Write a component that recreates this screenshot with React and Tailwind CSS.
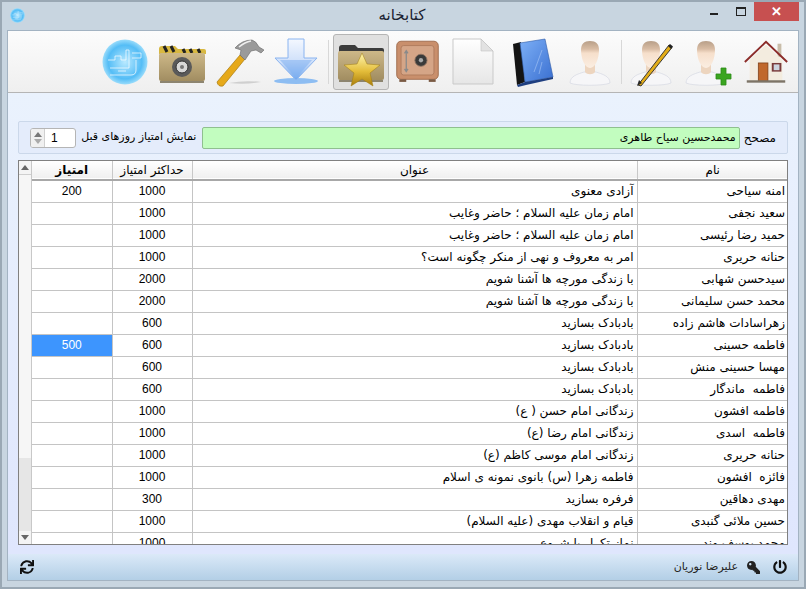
import React from 'react';
import { FaSync, FaKey, FaPowerOff } from 'react-icons/fa';

const rows = [
  ['امنه سیاحی', 'آزادی معنوی', '1000', '200'],
  ['سعید نجفی', 'امام زمان علیه السلام ؛ حاضر وغایب', '1000', ''],
  ['حمید رضا رئیسی', 'امام زمان علیه السلام ؛ حاضر وغایب', '1000', ''],
  ['حنانه حریری', 'امر به معروف و نهی از منکر چگونه است؟', '1000', ''],
  ['سیدحسن شهابی', 'با زندگی مورچه ها آشنا شویم', '2000', ''],
  ['محمد حسن سلیمانی', 'با زندگی مورچه ها آشنا شویم', '2000', ''],
  ['زهراسادات هاشم زاده', 'بادبادک بسازید', '600', ''],
  ['فاطمه حسینی', 'بادبادک بسازید', '600', '500'],
  ['مهسا حسینی منش', 'بادبادک بسازید', '600', ''],
  ['فاطمه  ماندگار', 'بادبادک بسازید', '600', ''],
  ['فاطمه افشون', 'زندگانی امام حسن ( ع)', '1000', ''],
  ['فاطمه  اسدی', 'زندگانی امام رضا (ع)', '1000', ''],
  ['حنانه حریری', 'زندگانی امام موسی کاظم (ع)', '1000', ''],
  ['فائزه  افشون', 'فاطمه زهرا (س) بانوی نمونه ی اسلام', '1000', ''],
  ['مهدی دهاقین', 'فرفره بسازید', '300', ''],
  ['حسین ملائی گنبدی', 'قیام و انقلاب مهدی (علیه السلام)', '1000', ''],
  ['محمد یوسف وند', 'نماز تکرار یا شروع', '1000', ''],
];

const Person = ({ children }) => (
  <svg width="52" height="52" viewBox="0 0 52 52" className="shrink-0">
    <defs>
      <linearGradient id="skin" x1="0" y1="0" x2="0" y2="1">
        <stop offset="0" stopColor="#b89f88" />
        <stop offset="0.3" stopColor="#d9bda5" />
        <stop offset="0.45" stopColor="#f6dfcb" />
        <stop offset="1" stopColor="#fbeee2" />
      </linearGradient>
    </defs>
    <path d="M6 47c0-7 8-9 14-11h12c6 2 14 4 14 11-6 3-34 3-40 0z" fill="#f6f6f8" stroke="#d5d9e2" strokeWidth="0.7" />
    <path d="M21 28h10v8c-2 3-8 3-10 0z" fill="#edd5bf" />
    <path d="M17 14c0-6 3-9 9-9s9 3 9 9c0 9-4 18-9 18s-9-9-9-18z" fill="url(#skin)" />
    {children}
  </svg>
);

const Home = () => (
  <svg width="50" height="50" viewBox="0 0 52 52" className="shrink-0">
    <rect x="38" y="7" width="4" height="14" fill="#c9bda9" />
    <path d="M9 24L26 8l17 16v22H9z" fill="#f3ecdf" />
    <path d="M4 26L26 5l22 21" fill="none" stroke="#8c2d2a" strokeWidth="2" />
    <rect x="18" y="27" width="10" height="19" fill="#c0682c" stroke="#7c3d17" strokeWidth="0.8" />
    <rect x="32" y="27" width="10" height="9" fill="#7a3b3b" />
    <rect x="34" y="28.5" width="6" height="6" fill="#cdd4de" />
    <rect x="6" y="45" width="40" height="2.5" fill="#7d7467" />
  </svg>
);

const UserAdd = () => (
  <Person>
    <path d="M37 37h5v-6h5v6h5v5h-5v6h-5v-6h-5z" fill="#3aa520" stroke="#2b8a17" strokeWidth="0.8" transform="translate(-1 1)" />
  </Person>
);

const UserEdit = () => (
  <Person>
    <path d="M13 49L44 9l3 2.5L16 50z" fill="#e3ad18" stroke="#2a2a2a" strokeWidth="0.9" />
    <path d="M12 50l2-6 3 3z" fill="#2a2a2a" />
    <path d="M43 10l2-2 3 2.5-2 2.5z" fill="#222" />
  </Person>
);

const Book = () => (
  <svg width="52" height="52" viewBox="0 0 52 52" className="shrink-0">
    <defs>
      <linearGradient id="bk" x1="0" y1="0" x2="1" y2="1">
        <stop offset="0" stopColor="#7db0f7" />
        <stop offset="1" stopColor="#3a6fd0" />
      </linearGradient>
    </defs>
    <path d="M7 8l8-2 4 40-8 3z" fill="#141414" />
    <path d="M14 7l25-4 8 38-28 5z" fill="url(#bk)" stroke="#2e5aa8" strokeWidth="0.6" />
    <path d="M11 49l8-3 28-5v2L20 49l-8 2z" fill="#1f3f80" />
    <path d="M28 36l8-22M33 38l3-12" stroke="#b8d3fb" strokeWidth="0.5" />
  </svg>
);

const Doc = () => (
  <svg width="52" height="52" viewBox="0 0 52 52" className="shrink-0">
    <defs>
      <linearGradient id="dc" x1="0" y1="0" x2="0" y2="1">
        <stop offset="0" stopColor="#ffffff" />
        <stop offset="1" stopColor="#e6e6e6" />
      </linearGradient>
    </defs>
    <path d="M7 3h28l12 12v33H7z" fill="url(#dc)" stroke="#c9c9c9" />
    <path d="M35 3v12h12z" fill="#e2e2e2" stroke="#c4c4c4" strokeWidth="0.6" />
  </svg>
);

const Safe = () => (
  <svg width="45" height="48" viewBox="0 0 52 52" className="shrink-0">
    <rect x="2" y="2" width="48" height="44" rx="5" fill="#c98f6c" stroke="#9a6647" />
    <rect x="7" y="7" width="38" height="34" rx="3" fill="#d5a587" stroke="#ad785a" />
    <rect x="5" y="46" width="8" height="3" fill="#7a5a44" />
    <rect x="39" y="46" width="8" height="3" fill="#7a5a44" />
    <path d="M13 14v22M11 16l2-3 2 3M11 34l2 3 2-3" stroke="#8a8a8a" strokeWidth="1.5" fill="none" />
    <circle cx="30" cy="24" r="7" fill="#3a3a3a" stroke="#8a7060" />
    <circle cx="30" cy="24" r="2.5" fill="#aaa" />
  </svg>
);

const folderGrad = (
  <linearGradient id="fold" x1="0" y1="0" x2="0" y2="1">
    <stop offset="0" stopColor="#cdb888" />
    <stop offset="1" stopColor="#a18d61" />
  </linearGradient>
);

const StarFolder = () => (
  <svg width="52" height="52" viewBox="0 0 52 52" className="shrink-0">
    <defs>
      {folderGrad}
      <linearGradient id="star" x1="0" y1="0" x2="0" y2="1">
        <stop offset="0" stopColor="#fff6b0" />
        <stop offset="0.55" stopColor="#e4bd3a" />
        <stop offset="1" stopColor="#a87c0c" />
      </linearGradient>
    </defs>
    <path d="M4 12q0-3 3-3h13l3 3h24q2 0 2 2v3H4z" fill="#3c3c3c" />
    <rect x="3" y="15" width="46" height="29" rx="2" fill="url(#fold)" />
    <rect x="4" y="44" width="44" height="2" fill="#8d8570" />
    <path d="M27 17l5 11 13 1-10 8 3 13-11-7-11 7 3-13-10-8 13-1z" fill="url(#star)" stroke="#a07c10" strokeWidth="0.5" />
  </svg>
);

const Download = () => (
  <svg width="52" height="52" viewBox="0 0 52 52" className="shrink-0">
    <defs>
      <linearGradient id="dl" x1="0" y1="0" x2="0" y2="1">
        <stop offset="0" stopColor="#f4f8ff" />
        <stop offset="0.55" stopColor="#cfe0fa" />
        <stop offset="1" stopColor="#6ea6ee" />
      </linearGradient>
    </defs>
    <ellipse cx="26" cy="45" rx="22" ry="3" fill="#8dbdf2" />
    <path d="M18 3h16v19h13L26 44 5 22h13z" fill="url(#dl)" stroke="#8ab4f0" />
    <path d="M26 24l-16 0 16 18 16-18z" fill="#7fb0f0" opacity="0.55" />
  </svg>
);

const Hammer = () => (
  <svg width="52" height="52" viewBox="0 0 52 52" className="shrink-0">
    <path d="M16 47q16-3 32-1-16 3-32 1z" fill="#cfcfcf" />
    <path d="M4 46l23-27 5 4L10 50q-5 1-6-4z" fill="#e6a91a" stroke="#a87a10" strokeWidth="0.7" />
    <path d="M22 12q7-8 17-8 4 1 7 7l5 3-3 3-5-3-5 1-6 9-5-5 1-5q-3-1-6-2z" fill="#9a9a9a" stroke="#666" strokeWidth="0.6" />
    <path d="M26 11q6-5 12-6" stroke="#eee" strokeWidth="1.5" fill="none" />
  </svg>
);

const CameraFolder = () => (
  <svg width="52" height="52" viewBox="0 0 52 52" className="shrink-0">
    <defs>{folderGrad}</defs>
    <path d="M3 13q0-3 3-3h13l3 3h26q2 0 2 2v3H3z" fill="#d8b840" />
    <path d="M8 10l3 6M15 10l3 6M27 13l2 4M34 13l2 4M42 13l2 4" stroke="#222" strokeWidth="3" />
    <rect x="3" y="17" width="46" height="28" rx="2" fill="url(#fold)" />
    <rect x="4" y="45" width="44" height="2" fill="#8d8570" />
    <circle cx="26" cy="31" r="10" fill="#5a5a5a" />
    <circle cx="26" cy="31" r="6" fill="#d8d8d8" stroke="#333" />
    <circle cx="26" cy="31" r="2" fill="#777" />
  </svg>
);

const Logo = ({ size = 46 }) => (
  <svg width={size} height={size} viewBox="0 0 46 46" className="shrink-0">
    <defs>
      <radialGradient id="lg" cx="0.5" cy="0.5" r="0.5">
        <stop offset="0" stopColor="#b9e9ff" />
        <stop offset="0.75" stopColor="#54bdf6" />
        <stop offset="1" stopColor="#9adcfb" />
      </radialGradient>
    </defs>
    <circle cx="23" cy="23" r="22.5" fill="url(#lg)" />
    <path d="M6 21h7v-4h6v4h5V11h3v18H8M30 14h9v5h-9M34 21v10q0 5-5 5H8M24 32h-8" fill="none" stroke="#fff" strokeWidth="0.7" />
  </svg>
);

const Separator = () => <div className="w-[1px] h-[44px] bg-[#d8d8d8] mx-[3px]"></div>;

const ToolButton = ({ active, children, className = 'w-[56px]' }) => (
  <div className={`${className} h-[56px] flex items-center justify-center rounded-[3px] border ${active ? 'bg-[#e0e0e0] border-[#b5b5b5]' : 'border-transparent'}`}>
    {children}
  </div>
);

const App = () => {
  return (
    <div className="w-[806px] h-[589px] bg-[#c8d5e0] border-2 border-[#9aa8b4] flex flex-col overflow-hidden text-[11px] text-black" style={{ fontFamily: '"DejaVu Sans", sans-serif' }}>
      {/* title bar */}
      <div className="h-[28px] shrink-0 flex items-start relative">
        <div className="w-[100px] pl-[8px] pt-[6px]"><Logo size={15} /></div>
        <div className="flex-1 text-center text-[15px] leading-[20px] text-[#1a2230] mt-[3px] -ml-[2px]" dir="rtl">کتابخانه</div>
        <div className="w-[100px] flex items-start justify-end">
          <div className="w-[8px] h-[2px] bg-[#222] mt-[11px] mr-[18px]"></div>
          <div className="w-[10px] h-[9px] border border-[#222] border-t-2 mt-[5px] mr-[8px]"></div>
          <div className="w-[45px] h-[19px] bg-[#c75050] flex items-center justify-center text-white mr-[5px] text-[13px] font-bold" style={{ fontFamily: '"Liberation Sans", sans-serif' }}>✕</div>
        </div>
      </div>

      {/* client area */}
      <div className="flex-1 mx-[5px] mb-[6px] border border-[#a3b3c2] flex flex-col min-h-0">
        {/* toolbar */}
        <div className="h-[62px] shrink-0 bg-gradient-to-b from-[#fcfcfc] to-[#efefef] border-b border-[#b5b5b5] flex items-center justify-end pr-[4px] gap-[1px]">
          <ToolButton><Logo /></ToolButton>
          <ToolButton><CameraFolder /></ToolButton>
          <ToolButton><Hammer /></ToolButton>
          <ToolButton><Download /></ToolButton>
          <Separator />
          <ToolButton active><StarFolder /></ToolButton>
          <ToolButton className="w-[55px]"><Safe /></ToolButton>
          <ToolButton className="w-[56px] pr-[4px]"><Doc /></ToolButton>
          <ToolButton className="w-[58px]"><Book /></ToolButton>
          <ToolButton className="w-[55px]"><Person /></ToolButton>
          <Separator />
          <ToolButton className="w-[54px] pr-[4px]"><UserEdit /></ToolButton>
          <ToolButton className="w-[56px] pr-[6px]"><UserAdd /></ToolButton>
          <ToolButton><Home /></ToolButton>
        </div>

        {/* content */}
        <div className="flex-1 min-h-0 bg-gradient-to-b from-[#eaf2fd] to-[#dfe6fd] px-[10px] pt-[28px] pb-[9px] flex flex-col">
          {/* filter panel */}
          <div className="h-[33px] shrink-0 border border-[#cbd8ea] rounded-[2px] bg-[#e4ecfb] flex items-center pl-[11px] pr-[11px]">
            <div className="w-[46px] h-[20px] bg-white border border-[#b5b5b5] rounded-[3px] flex items-stretch overflow-hidden">
              <div className="w-[14px] border-r border-[#d0d0d0] bg-[#f0f0f0] flex flex-col items-center justify-center gap-[2px]">
                <div className="w-0 h-0 border-x-[4px] border-x-transparent border-b-[5px] border-b-[#777]"></div>
                <div className="w-0 h-0 border-x-[4px] border-x-transparent border-t-[5px] border-t-[#aaa]"></div>
              </div>
              <div className="flex-1 pl-[6px] leading-[18px] text-[12px]" style={{ fontFamily: '"Liberation Sans", sans-serif' }}>1</div>
            </div>
            <div className="w-[126px] text-center" dir="rtl">نمایش امتیاز روزهای قبل</div>
            <div className="w-[539px] h-[22px] bg-[#c2fdbf] border border-[#8fc08f] rounded-[2px] pr-[3px] leading-[20px] text-right" dir="rtl">محمدحسین سیاح طاهری</div>
            <div className="flex-1 text-center text-[12px] pl-[4px]" dir="rtl">مصحح</div>
          </div>

          {/* table */}
          <div className="mt-[6px] h-[385px] shrink-0 border border-[#808080] bg-white flex overflow-hidden text-[12px]">
            <div className="w-[13px] shrink-0 flex flex-col border-r border-[#c8c8c8] bg-[#e6e6e6]">
              <div className="h-[14px] bg-[#f4f4f4] border-b border-[#cfcfcf] flex items-center justify-center">
                <div className="w-0 h-0 border-x-[4px] border-x-transparent border-b-[5px] border-b-[#666]"></div>
              </div>
              <div className="h-[283px] bg-[#f6f6f6]"></div>
              <div className="flex-1"></div>
              <div className="h-[13px] bg-[#f4f4f4] flex items-center justify-center">
                <div className="w-0 h-0 border-x-[4px] border-x-transparent border-t-[5px] border-t-[#666]"></div>
              </div>
            </div>
            <table className="table-fixed border-collapse w-[756px] h-fit" dir="ltr">
              <colgroup>
                <col className="w-[80px]" />
                <col className="w-[80px]" />
                <col className="w-[445px]" />
                <col className="w-[151px]" />
              </colgroup>
              <thead>
                <tr className="h-[19px] leading-[15px] bg-gradient-to-b from-[#ffffff] to-[#f0f0f0] border-b-2 border-[#a8a8a8]">
                  <th className="font-bold text-center pt-[1px] border-r border-[#c8c8c8]" dir="rtl">امتیاز</th>
                  <th className="font-normal text-center pt-[1px] border-r border-[#c8c8c8]" dir="rtl">حداکثر امتیاز</th>
                  <th className="font-normal text-center pt-[1px] border-r border-[#c8c8c8]" dir="rtl">عنوان</th>
                  <th className="font-normal text-center pt-[1px]" dir="rtl">نام</th>
                </tr>
              </thead>
              <tbody>
                {rows.map((row, i) => (
                  <tr key={i} className="h-[22px] border-b border-[#c4c4c4]">
                    <td className={`text-center border-r border-[#c4c4c4] ${row[3] === '500' ? 'bg-[#3d95fe] text-white' : ''}`} style={{ fontFamily: '"Liberation Sans", sans-serif' }}>{row[3]}</td>
                    <td className="text-center border-r border-[#c4c4c4]" style={{ fontFamily: '"Liberation Sans", sans-serif' }}>{row[2]}</td>
                    <td className="text-right pr-[3px] border-r border-[#c4c4c4] whitespace-pre" dir="rtl">{row[1]}</td>
                    <td className="text-right pr-[3px] whitespace-pre" dir="rtl">{row[0]}</td>
                  </tr>
                ))}
              </tbody>
            </table>
          </div>
        </div>

        {/* status bar */}
        <div className="h-[26px] shrink-0 bg-gradient-to-b from-[#dbe9f8] to-[#b3cfe6] flex items-center pl-[12px] pr-[11px]">
          <FaSync size={14} color="#111" />
          <div className="flex-1"></div>
          <div dir="rtl" className="text-[#222]">علیرضا نوریان</div>
          <FaKey size={13} color="#222" className="ml-[9px] -scale-x-100" />
          <FaPowerOff size={14} color="#111" className="ml-[13px]" />
        </div>
      </div>
    </div>
  );
};

export default App;
